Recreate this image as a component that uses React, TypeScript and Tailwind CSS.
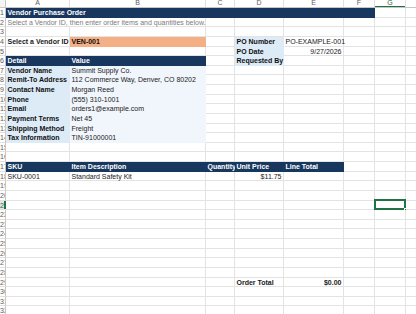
import React from 'react';

type Fill = 'navy' | 'blue' | 'pale' | 'orange';
type Cell = { t?: string; b?: boolean; f?: Fill; r?: boolean; s?: number; g?: boolean };

const FILL: Record<Fill, string> = {
  navy: 'bg-[#17375e] border-[#17375e] text-white',
  blue: 'bg-[#ddebf7] border-[#ddebf7] text-[#111]',
  pale: 'bg-[#f1f6fc] border-[#f1f6fc] text-[#222]',
  orange: 'bg-[#f4b084] border-[#f4b084] text-[#111]',
};

const SPAN: Record<number, string> = { 1: 'col-span-1', 2: 'col-span-2', 6: 'col-span-6' };

const COLS = ['A', 'B', 'C', 'D', 'E', 'F', 'G', 'H'];
const WIDTHS = ['w-[64px]', 'w-[136px]', 'w-[29px]', 'w-[49px]', 'w-[60px]', 'w-[31px]', 'w-[31px]', 'w-[40px]'];
const blank = (n: number): Cell[] => Array.from({ length: n }, () => ({}));

const details: [string, string][] = [
  ['Vendor Name', 'Summit Supply Co.'],
  ['Remit-To Address', '112 Commerce Way, Denver, CO 80202'],
  ['Contact Name', 'Morgan Reed'],
  ['Phone', '(555) 310-1001'],
  ['Email', 'orders1@example.com'],
  ['Payment Terms', 'Net 45'],
  ['Shipping Method', 'Freight'],
  ['Tax Information', 'TIN-91000001'],
];

const sheet: Record<number, Cell[]> = {
  1: [{ t: 'Vendor Purchase Order', b: true, f: 'navy', s: 6 }, ...blank(2)],
  2: [{ t: 'Select a Vendor ID, then enter order items and quantities below.', g: true, s: 2 }, ...blank(6)],
  4: [
    { t: 'Select a Vendor ID', b: true },
    { t: 'VEN-001', b: true, f: 'orange' },
    {},
    { t: 'PO Number', b: true, f: 'blue' },
    { t: 'PO-EXAMPLE-001' },
    ...blank(3),
  ],
  5: [...blank(3), { t: 'PO Date', b: true, f: 'blue' }, { t: '9/27/2026', r: true }, ...blank(3)],
  6: [
    { t: 'Detail', b: true, f: 'navy' },
    { t: 'Value', b: true, f: 'navy' },
    {},
    { t: 'Requested By', b: true, f: 'blue' },
    ...blank(4),
  ],
  17: [
    { t: 'SKU', b: true, f: 'navy' },
    { t: 'Item Description', b: true, f: 'navy' },
    { t: 'Quantity', b: true, f: 'navy', r: true },
    { t: 'Unit Price', b: true, f: 'navy' },
    { t: 'Line Total', b: true, f: 'navy' },
    ...blank(3),
  ],
  18: [{ t: 'SKU-0001' }, { t: 'Standard Safety Kit' }, {}, { t: '$11.75', r: true }, ...blank(4)],
  29: [...blank(3), { t: 'Order Total', b: true }, { t: '$0.00', b: true, r: true }, ...blank(3)],
};
details.forEach(([label, value], i) => {
  sheet[7 + i] = [{ t: label, b: true, f: 'blue' }, { t: value, f: 'pale' }, ...blank(6)];
});

const ROWS = Array.from({ length: 32 }, (_, i) => i + 1);
const SELECTED = { row: 21, col: 6 };

export default function App() {
  return (
    <div className="w-[416px] h-[314px] overflow-hidden bg-white [font-family:'Liberation_Sans',Arial,sans-serif]">
      {/* column headers */}
      <div className="flex h-[8px] border-b border-[#c6c6c6]">
        <div className="w-[6px] shrink-0 border-r border-[#c6c6c6] bg-[#f5f5f5]" />
        {COLS.map((c, i) => (
          <div
            key={c}
            className={`${WIDTHS[i]} relative shrink-0 flex items-end justify-center overflow-hidden border-r border-[#e0e0e0] text-[7px] leading-[7px] pb-[1px] ${
              i === SELECTED.col ? 'text-[#1e6b3f]' : 'text-[#606060]'
            }`}
          >
            {c}
            {i === SELECTED.col && <div className="absolute left-0 right-0 bottom-0 h-[1.5px] bg-[#217346]" />}
          </div>
        ))}
      </div>

      <div className="grid grid-cols-[6px_64px_136px_29px_49px_60px_31px_31px_40px] auto-rows-[9.63px]">
        {ROWS.map((r) => {
          const cells = sheet[r] ?? blank(8);
          const active = r === SELECTED.row;
          return (
            <React.Fragment key={r}>
              <div
                className={
                  active
                    ? 'relative overflow-hidden whitespace-nowrap text-right border-b border-[#e0e0e0] bg-[#e6e6e6] text-[7px] leading-[9.63px] pr-[2px] text-[#1e6b3f]'
                    : 'overflow-hidden whitespace-nowrap text-right border-b border-r border-b-[#e0e0e0] border-r-[#c6c6c6] bg-white text-[7px] leading-[9.63px] pr-[1px] text-[#606060]'
                }
              >
                {r}
                {active && <div className="absolute top-0 bottom-0 right-0 w-[2px] bg-[#217346]" />}
              </div>
              {cells.map((cell, ci) => {
                const isSel = active && ci === SELECTED.col;
                return (
                  <div
                    key={ci}
                    className={[
                      'relative border-r border-b whitespace-nowrap px-[1.5px] text-[7px] leading-[9.63px]',
                      SPAN[cell.s ?? 1],
                      cell.f ? FILL[cell.f] : 'border-[#e3e3e3] text-[#1a1a1a]',
                      cell.g ? 'text-[#7b7b7b]' : '',
                      cell.b ? 'font-bold' : '',
                      cell.r ? 'text-right' : '',
                    ].join(' ')}
                  >
                    {cell.t}
                    {isSel && (
                      <>
                        <div className="absolute -left-[1.5px] -top-[1.5px] -right-[0.5px] -bottom-[0.5px] border-2 border-[#217346]" />
                        <div className="absolute -right-[2px] -bottom-[2px] w-[3px] h-[3px] bg-[#217346] border border-white" />
                      </>
                    )}
                  </div>
                );
              })}
            </React.Fragment>
          );
        })}
      </div>
    </div>
  );
}
